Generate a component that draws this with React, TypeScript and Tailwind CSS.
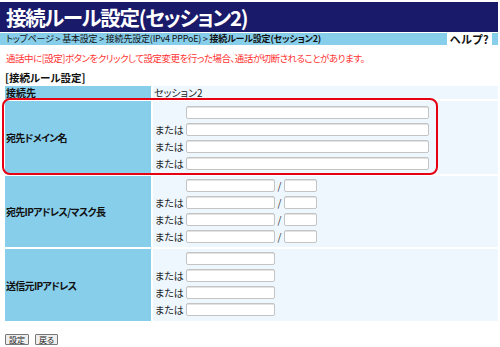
const FONT = "font-['Noto_Sans_CJK_JP','Noto_Sans',sans-serif] [font-feature-settings:'palt']";

function Field({ w }: { w: string }) {
  return <div className={`h-[13px] ${w} rounded-[2px] border border-[#c4c4c4] bg-white shadow-[inset_0_1px_0_#e2e2e2]`} />;
}

function Line({ or, children }: { or?: boolean; children: React.ReactNode }) {
  return (
    <div className="flex h-[13px] items-center">
      <span className="w-[33px] pl-[2px] text-[10px] leading-none text-[#222]">{or ? "または" : ""}</span>
      {children}
    </div>
  );
}

function Row({
  label,
  pad,
  children,
}: {
  label: string;
  pad: string;
  children: React.ReactNode;
}) {
  return (
    <div className="flex gap-[2px]">
      <div className="flex w-[146px] items-center bg-[#87ceeb] pl-[1px] text-[10px] font-bold tracking-[-0.7px] text-[#111]">{label}</div>
      <div className={`flex flex-1 flex-col gap-[4px] bg-[#eff7fe] ${pad}`}>{children}</div>
    </div>
  );
}

export default function App() {
  const four = [false, true, true, true];
  return (
    <div className={`relative h-[347px] w-[500px] overflow-hidden bg-white ${FONT}`}>
      <div className="mt-[2px] h-[30px] w-[498px] bg-[#1a1a6b] pl-[6px] text-[20.5px] font-bold leading-[30px] tracking-[-1.3px] text-white">
        接続ルール設定(セッション2)
      </div>
      <div className="mt-[1px] flex h-[12px] w-[498px] text-[9px] leading-[12px] text-[#111]">
        <div className="flex-1 whitespace-nowrap bg-[#87ceeb] pl-[6px] tracking-[-0.2px]">
          トップページ &gt; 基本設定 &gt; 接続先設定(IPv4 PPPoE) &gt; <b>接続ルール設定(セッション2)</b>
        </div>
        <div className="w-[45px] text-center text-[11px] font-bold tracking-[0.5px]">ヘルプ?</div>
        <div className="w-[6px] bg-[#87ceeb]" />
      </div>
      <p className="mt-[7px] whitespace-nowrap pl-[6px] text-[9.5px] leading-[12px] tracking-[-0.5px] text-[#ff3333]">
        通話中に[設定]ボタンをクリックして設定変更を行った場合、通話が切断されることがあります。
      </p>
      <p className="mt-[8px] pl-[5px] text-[10.5px] font-bold leading-[11px] text-[#111]">[接続ルール設定]</p>

      <div className="ml-[5px] mt-[3px] flex w-[493px] flex-col gap-[2px]">
        <div className="flex h-[13px] gap-[2px]">
          <div className="flex w-[146px] items-center bg-[#87ceeb] pl-[1px] text-[10px] font-bold leading-none text-[#111]">接続先</div>
          <div className="flex flex-1 items-center bg-[#eff7fe] pl-[1px] text-[10px] leading-none text-[#222]">セッション2</div>
        </div>
        <Row label="宛先ドメイン名" pad="pt-[5px] pb-[4px]">
          {four.map((o, i) => (
            <Line key={i} or={o}>
              <Field w="w-[243px]" />
            </Line>
          ))}
        </Row>
        <Row label="宛先IPアドレス/マスク長" pad="pt-[3px] pb-[4px]">
          {four.map((o, i) => (
            <Line key={i} or={o}>
              <Field w="w-[89px]" />
              <span className="w-[9px] text-center text-[10px] leading-none text-[#333]">/</span>
              <Field w="w-[33px]" />
            </Line>
          ))}
        </Row>
        <Row label="送信元IPアドレス" pad="pt-[3px] pb-[5px]">
          {four.map((o, i) => (
            <Line key={i} or={o}>
              <Field w="w-[89px]" />
            </Line>
          ))}
        </Row>
      </div>

      <div className="ml-[5px] mt-[13px] flex gap-[6px]">
        <button className="h-[11px] rounded-[1px] border border-[#777] bg-[#eeeeee] px-[3px] text-[8px] leading-[9px] text-[#222]">設定</button>
        <button className="h-[11px] rounded-[1px] border border-[#777] bg-[#eeeeee] px-[3px] text-[8px] leading-[9px] text-[#222]">戻る</button>
      </div>

      <div className="pointer-events-none absolute left-[2px] top-[98px] h-[77px] w-[436px] rounded-[8px] border-2 border-[#e60012]" />
    </div>
  );
}
